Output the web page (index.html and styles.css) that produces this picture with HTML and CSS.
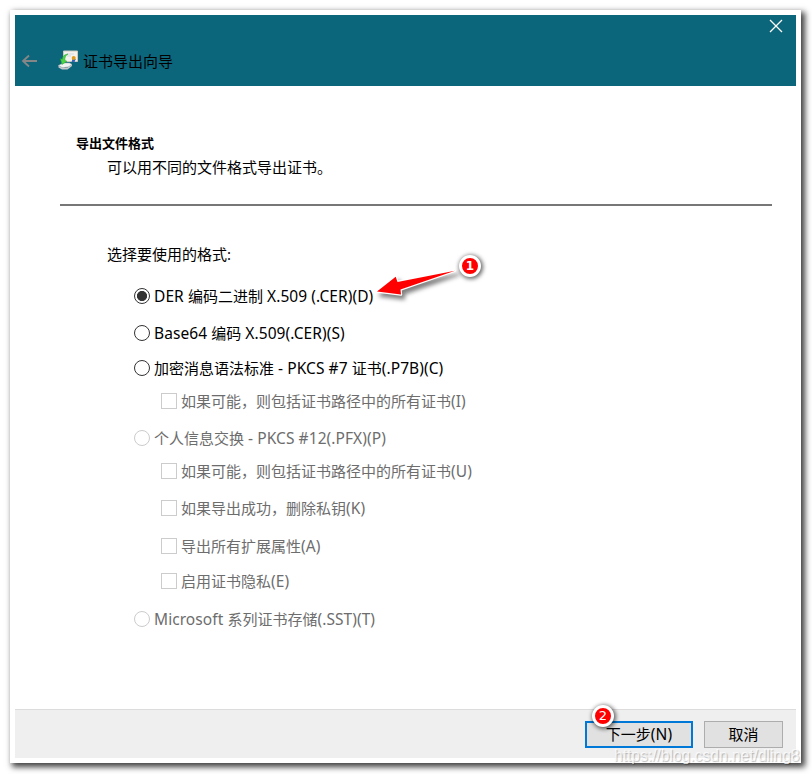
FILE: index.html
```html
<!DOCTYPE html>
<html lang="zh-CN">
<head>
<meta charset="utf-8">
<title>证书导出向导</title>
<link rel="stylesheet" href="styles.css">
</head>
<body>
<main class="window">
  <header class="titlebar">
    <svg class="back" width="17" height="14" viewBox="0 0 17 14"><path d="M8 1.5 2 7l6 5.500M2 7h14" fill="none" stroke="#868686" stroke-width="1.800"/></svg>
    <svg class="cert" width="21" height="20" viewBox="0 0 21 20">
      <path d="M5.500 1h14v10.500h-14z" fill="#f3f2ee" stroke="#d0c8bb"/>
      <path d="M9 4h7M9 6h4" stroke="#d5d9e0"/>
      <path d="m14.500 9-1 3.500 1.800-.8 1 .8 1.500-3.500z" fill="#2d61bd"/>
      <circle cx="15.700" cy="8" r="2" fill="#e09a1b"/>
      <path d="m.5 15.500 5-2.500h6l2.500 1.500-4.500 3H4z" fill="#f1f2f2" stroke="#b5babb" stroke-width=".6"/>
      <path d="m.5 15.500 3.500 2h5.500l4.500-3V16l-4.500 3.500H4L.5 17.500z" fill="#c3c9cb"/>
      <path d="m6.500 17.500 3.500-.3" stroke="#819098" stroke-width=".8"/>
      <path d="M10 4C6.500 4.500 4.500 6 4.300 9.300L2.500 8.800 4 14.500l5-3.300-2-.7C6.500 7.800 7.500 5.500 10 4z" fill="#4dd344" stroke="#2da636" stroke-width=".5"/>
    </svg>
    <h1>证书导出向导</h1>
    <svg class="close" width="14" height="14" viewBox="0 0 14 14"><path d="m1 1 12 12M13 1 1 13" stroke="#fff" stroke-width="1.300"/></svg>
  </header>
  <section class="intro">
    <h2>导出文件格式</h2>
    <p>可以用不同的文件格式导出证书。</p>
  </section>
  <section class="formats">
    <p class="prompt">选择要使用的格式:</p>
    <div class="option first"><i class="radio selected"></i><span><b>DER </b>编码二进制<b> X.509 (.CER)(D)</b></span></div>
    <div class="option g17"><i class="radio"></i><span><b>Base64 </b>编码<b> X.509(.CER)(S)</b></span></div>
    <div class="option g15"><i class="radio"></i><span>加密消息语法标准<b> - PKCS #7 </b>证书<b>(.P7B)(C)</b></span></div>
    <div class="option child g13"><i class="check"></i><span>如果可能，则包括证书路径中的所有证书<b>(I)</b></span></div>
    <div class="option disabled g17"><i class="radio"></i><span>个人信息交换<b> - PKCS #12(.PFX)(P)</b></span></div>
    <div class="option child g13"><i class="check"></i><span>如果可能，则包括证书路径中的所有证书<b>(U)</b></span></div>
    <div class="option child g17"><i class="check"></i><span>如果导出成功，删除私钥<b>(K)</b></span></div>
    <div class="option child g18"><i class="check"></i><span>导出所有扩展属性<b>(A)</b></span></div>
    <div class="option child g15"><i class="check"></i><span>启用证书隐私<b>(E)</b></span></div>
    <div class="option disabled g18"><i class="radio"></i><span><b>Microsoft </b>系列证书存储<b>(.SST)(T)</b></span></div>
  </section>
  <footer>
    <div class="button next"><span>下一步<b>(N)</b></span></div>
    <div class="button cancel"><span>取消</span></div>
  </footer>
</main>
<svg class="arrow" width="100" height="50" viewBox="370 255 100 50"><path d="M377 291.500 395.700 276.700 397.500 282 455 270.700 400.500 289.500 401 294.500z" fill="#f00" stroke="#fff" stroke-width="2.400" stroke-linejoin="round" paint-order="stroke"/></svg>
<div class="badge one">1</div>
<div class="badge two">2</div>
<div class="watermark">https://blog.csdn.net/dling8</div>
</body>
</html>
```
FILE: styles.css
```css
* { box-sizing: border-box; }
body {
  margin: 0;
  width: 812px;
  height: 774px;
  padding: 10px;
  overflow: hidden;
  position: relative;
  background: #fff;
  color: #000;
  font: 15px/20px "Noto Sans", "Noto Sans CJK SC", sans-serif;
}
h1, h2, p { margin: 0; font-size: 15px; font-weight: 400; }
b { font-weight: 400; font-size: 15.5px; line-height: 1; letter-spacing: .07px; white-space: pre; }
.window {
  width: 791px;
  height: 753px;
  border: 5px solid #fff;
  background: #fff;
  box-shadow: 3px 3px 6px 1px rgba(0, 0, 0, .75);
  display: flex;
  flex-direction: column;
}
.titlebar {
  height: 71px;
  flex: none;
  background: #0b667c;
  display: flex;
  align-items: flex-start;
}
.back { margin: 39px 0 0 6px; }
.cert { margin: 35px 0 0 20px; }
h1 { margin: 36px 0 0 4px; }
.close { margin: 4px 13px 0 auto; }
.intro {
  margin: 0 24px 0 45px;
  height: 120px;
  flex: none;
  padding: 47px 0 0 16px;
  border-bottom: 2px solid #777;
}
h2 { font-size: 13px; font-weight: 700; }
.intro p { margin: 4px 0 0 31px; }
.formats { padding: 38px 0 0 92px; flex: 1; }
.option { display: flex; height: 20px; align-items: center; margin-left: 27px; white-space: nowrap; }
.option.first { margin-top: 22px; }
.g13 { margin-top: 13px; }
.g15 { margin-top: 15px; }
.g17 { margin-top: 17px; }
.g18 { margin-top: 18px; }
.child, .disabled { color: #6d6d6d; }
.option.child { margin-left: 54px; }
.radio { width: 16px; height: 16px; flex: none; border: 1px solid #333; border-radius: 50%; margin-right: 4px; }
.selected { background: radial-gradient(circle, #333 0 4.700px, #fff 5.400px); }
.disabled .radio { border-color: #ccc; }
.check { width: 16px; height: 16px; flex: none; border: 1px solid #ccc; margin-right: 4px; }
footer {
  height: 49px;
  flex: none;
  background: #efefef;
  border-top: 1px solid #dcdcdc;
  display: flex;
  justify-content: flex-end;
  padding: 11px 13px 0 0;
  gap: 11px;
}
.button {
  height: 27px;
  background: #e1e1e1;
  border: 1px solid #adadad;
  display: flex;
  align-items: center;
  justify-content: center;
  padding-bottom: 2px;
}
.next { width: 108px; border: 2px solid #0078d7; }
.cancel { width: 79px; }
.arrow { position: absolute; left: 370px; top: 255px; filter: drop-shadow(3px 4px 2px rgba(0, 0, 0, .5)); }
.badge {
  position: absolute;
  width: 22px;
  height: 22px;
  border: 3px solid #fff;
  border-radius: 50%;
  background: #f00;
  color: #fff;
  font: 700 12px/16px "DejaVu Sans", sans-serif;
  text-align: center;
  box-shadow: 1px 1px 4px 1px rgba(0, 0, 0, .6);
}
.one { left: 459px; top: 255px; }
.two { left: 592px; top: 705px; font-weight: 400; font-size: 13px; }
.watermark {
  position: absolute;
  left: 614px;
  top: 746px;
  font: 15.6px/20px "Liberation Sans", sans-serif;
  color: rgba(255, 255, 255, .75);
  text-shadow: 1px 1px 1px rgba(0, 0, 0, .25);
  white-space: nowrap;
}
```
